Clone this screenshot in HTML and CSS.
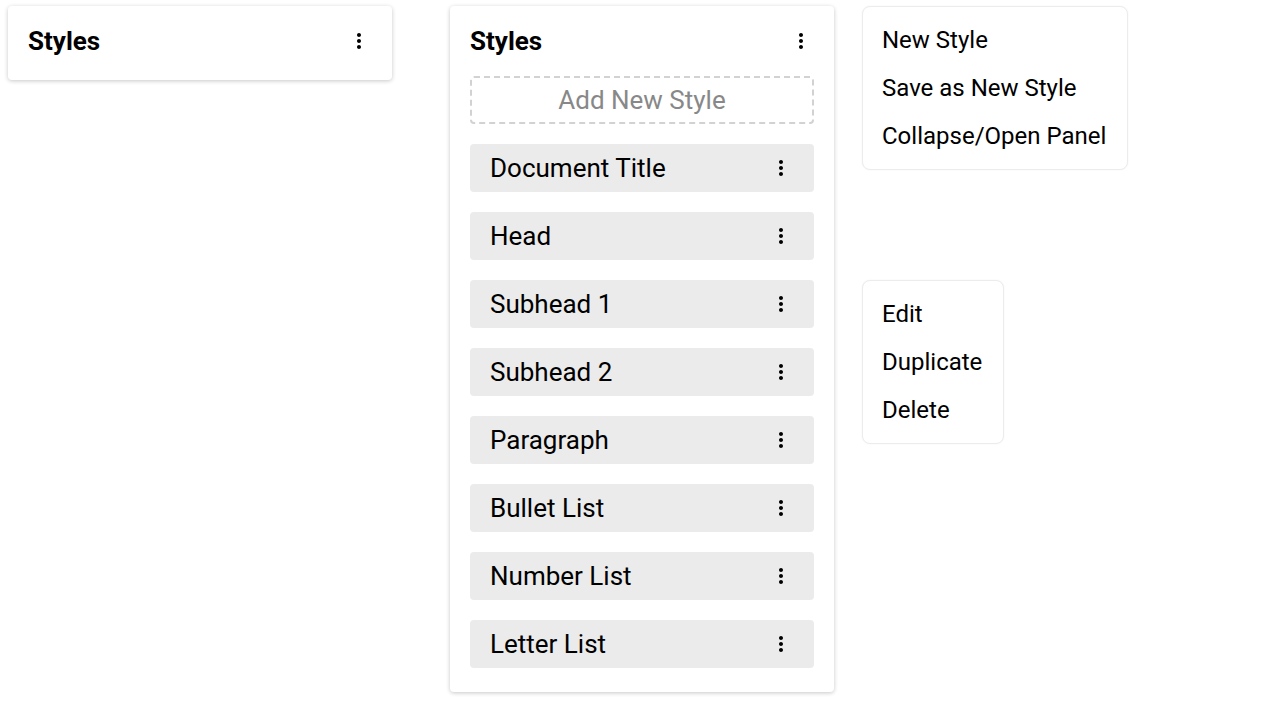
FILE: index.html
```html
<!DOCTYPE html>
<html>
<head>
<meta charset="utf-8">
<link rel="stylesheet" href="styles.css">
</head>
<body>
<div class="page">
  <section class="panel panel-collapsed">
    <header class="panel-head">
      <h2 class="panel-title">Styles</h2>
      <svg class="more" viewBox="0 0 24 24"><path d="M12 8c1.1 0 2-.9 2-2s-.9-2-2-2-2 .9-2 2 .9 2 2 2zm0 2c-1.1 0-2 .9-2 2s.9 2 2 2 2-.9 2-2-.9-2-2-2zm0 6c-1.1 0-2 .9-2 2s.9 2 2 2 2-.9 2-2-.9-2-2-2z"/></svg>
    </header>
  </section>

  <section class="panel panel-open">
    <header class="panel-head">
      <h2 class="panel-title">Styles</h2>
      <svg class="more" viewBox="0 0 24 24"><path d="M12 8c1.1 0 2-.9 2-2s-.9-2-2-2-2 .9-2 2 .9 2 2 2zm0 2c-1.1 0-2 .9-2 2s.9 2 2 2 2-.9 2-2-.9-2-2-2zm0 6c-1.1 0-2 .9-2 2s.9 2 2 2 2-.9 2-2-.9-2-2-2z"/></svg>
    </header>
    <div class="style-list">
      <div class="add-style">Add New Style</div>
      <div class="style-row"><span>Document Title</span><svg class="more" viewBox="0 0 24 24"><path d="M12 8c1.1 0 2-.9 2-2s-.9-2-2-2-2 .9-2 2 .9 2 2 2zm0 2c-1.1 0-2 .9-2 2s.9 2 2 2 2-.9 2-2-.9-2-2-2zm0 6c-1.1 0-2 .9-2 2s.9 2 2 2 2-.9 2-2-.9-2-2-2z"/></svg></div>
      <div class="style-row"><span>Head</span><svg class="more" viewBox="0 0 24 24"><path d="M12 8c1.1 0 2-.9 2-2s-.9-2-2-2-2 .9-2 2 .9 2 2 2zm0 2c-1.1 0-2 .9-2 2s.9 2 2 2 2-.9 2-2-.9-2-2-2zm0 6c-1.1 0-2 .9-2 2s.9 2 2 2 2-.9 2-2-.9-2-2-2z"/></svg></div>
      <div class="style-row"><span>Subhead 1</span><svg class="more" viewBox="0 0 24 24"><path d="M12 8c1.1 0 2-.9 2-2s-.9-2-2-2-2 .9-2 2 .9 2 2 2zm0 2c-1.1 0-2 .9-2 2s.9 2 2 2 2-.9 2-2-.9-2-2-2zm0 6c-1.1 0-2 .9-2 2s.9 2 2 2 2-.9 2-2-.9-2-2-2z"/></svg></div>
      <div class="style-row"><span>Subhead 2</span><svg class="more" viewBox="0 0 24 24"><path d="M12 8c1.1 0 2-.9 2-2s-.9-2-2-2-2 .9-2 2 .9 2 2 2zm0 2c-1.1 0-2 .9-2 2s.9 2 2 2 2-.9 2-2-.9-2-2-2zm0 6c-1.1 0-2 .9-2 2s.9 2 2 2 2-.9 2-2-.9-2-2-2z"/></svg></div>
      <div class="style-row"><span>Paragraph</span><svg class="more" viewBox="0 0 24 24"><path d="M12 8c1.1 0 2-.9 2-2s-.9-2-2-2-2 .9-2 2 .9 2 2 2zm0 2c-1.1 0-2 .9-2 2s.9 2 2 2 2-.9 2-2-.9-2-2-2zm0 6c-1.1 0-2 .9-2 2s.9 2 2 2 2-.9 2-2-.9-2-2-2z"/></svg></div>
      <div class="style-row"><span>Bullet List</span><svg class="more" viewBox="0 0 24 24"><path d="M12 8c1.1 0 2-.9 2-2s-.9-2-2-2-2 .9-2 2 .9 2 2 2zm0 2c-1.1 0-2 .9-2 2s.9 2 2 2 2-.9 2-2-.9-2-2-2zm0 6c-1.1 0-2 .9-2 2s.9 2 2 2 2-.9 2-2-.9-2-2-2z"/></svg></div>
      <div class="style-row"><span>Number List</span><svg class="more" viewBox="0 0 24 24"><path d="M12 8c1.1 0 2-.9 2-2s-.9-2-2-2-2 .9-2 2 .9 2 2 2zm0 2c-1.1 0-2 .9-2 2s.9 2 2 2 2-.9 2-2-.9-2-2-2zm0 6c-1.1 0-2 .9-2 2s.9 2 2 2 2-.9 2-2-.9-2-2-2z"/></svg></div>
      <div class="style-row"><span>Letter List</span><svg class="more" viewBox="0 0 24 24"><path d="M12 8c1.1 0 2-.9 2-2s-.9-2-2-2-2 .9-2 2 .9 2 2 2zm0 2c-1.1 0-2 .9-2 2s.9 2 2 2 2-.9 2-2-.9-2-2-2zm0 6c-1.1 0-2 .9-2 2s.9 2 2 2 2-.9 2-2-.9-2-2-2z"/></svg></div>
    </div>
  </section>

  <div class="menus">
    <ul class="menu menu-panel">
      <li>New Style</li>
      <li>Save as New Style</li>
      <li>Collapse/Open Panel</li>
    </ul>
    <ul class="menu menu-item">
      <li>Edit</li>
      <li>Duplicate</li>
      <li>Delete</li>
    </ul>
  </div>
</div>
</body>
</html>
```

FILE: styles.css
```css
* { box-sizing: border-box; }

html, body {
  margin: 0;
  padding: 0;
  background: #fff;
}

body {
  font-family: Roboto, "Liberation Sans", Arial, sans-serif;
  color: #000;
}

.page {
  display: flex;
  align-items: flex-start;
  padding: 6px 8px;
}

.panel {
  width: 384px;
  background: #fff;
  border-radius: 4px;
  box-shadow: 0 1px 4px rgba(0, 0, 0, 0.22);
  padding: 20px 20px 24px;
}

.panel-collapsed { margin-right: 58px; }
.panel-open { margin-right: 28px; }

.panel-head {
  display: flex;
  align-items: center;
  justify-content: space-between;
  height: 30px;
}

.panel-title {
  margin: 0;
  font-size: 26px;
  font-weight: 700;
  line-height: 30px;
}

.more {
  width: 24px;
  height: 24px;
  fill: #000;
  flex: none;
  margin-right: 1px;
}

.style-list {
  display: flex;
  flex-direction: column;
  gap: 20px;
  margin-top: 20px;
}

.add-style {
  height: 48px;
  border: 2px dashed #d2d2d2;
  border-radius: 4px;
  display: flex;
  align-items: center;
  justify-content: center;
  font-size: 26px;
  color: #888;
}

.style-row {
  height: 48px;
  background: #ebebeb;
  border-radius: 4px;
  display: flex;
  align-items: center;
  justify-content: space-between;
  padding: 0 20px;
  font-size: 26px;
}

.menus {
  display: flex;
  flex-direction: column;
  align-items: flex-start;
  gap: 110px;
}

.menu {
  list-style: none;
  margin: 0;
  padding: 9px 21px 9px 19px;
  background: #fff;
  border: 1px solid #ececec;
  border-radius: 8px;
  box-shadow: 0 0 2px rgba(0, 0, 0, 0.05);
  font-size: 24px;
}

.menu li {
  height: 48px;
  line-height: 48px;
  white-space: nowrap;
}
```
